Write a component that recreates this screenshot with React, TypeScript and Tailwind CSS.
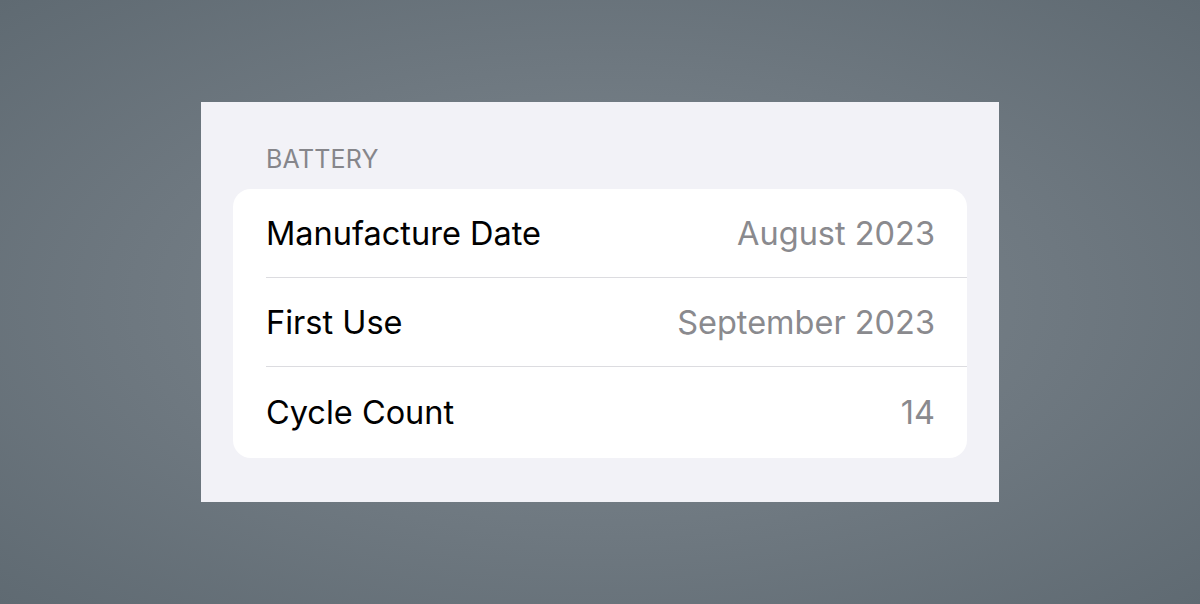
const rows = [
  { label: "Manufacture Date", value: "August 2023" },
  { label: "First Use", value: "September 2023" },
  { label: "Cycle Count", value: "14" },
]

export default function App() {
  return (
    <div className="flex h-[604px] w-full items-center justify-center bg-[radial-gradient(ellipse_at_center,#7f8990_0%,#6e7880_55%,#5f6a72_100%)] font-['Inter',sans-serif]">
      <div className="flex h-[400px] w-[798px] flex-col bg-[#f2f2f7] px-8 pt-[41px]">
        <div className="pl-[33px] text-[25px] leading-[32px] tracking-[0.2px] text-[#86868b]">
          BATTERY
        </div>
        <div className="mt-[14px] flex flex-col rounded-[18px] bg-white">
          {rows.map((row, i) => (
            <div key={row.label} className="pl-[33px]">
              <div
                className={`flex h-[89px] items-center justify-between pr-8 pt-[2px] ${
                  i < rows.length - 1 ? "border-b border-[#dcdce0]" : "h-[91px]"
                }`}
              >
                <span className="text-[32.5px] text-black">{row.label}</span>
                <span className="text-[32.5px] text-[#8a8a8e]">{row.value}</span>
              </div>
            </div>
          ))}
        </div>
      </div>
    </div>
  )
}
